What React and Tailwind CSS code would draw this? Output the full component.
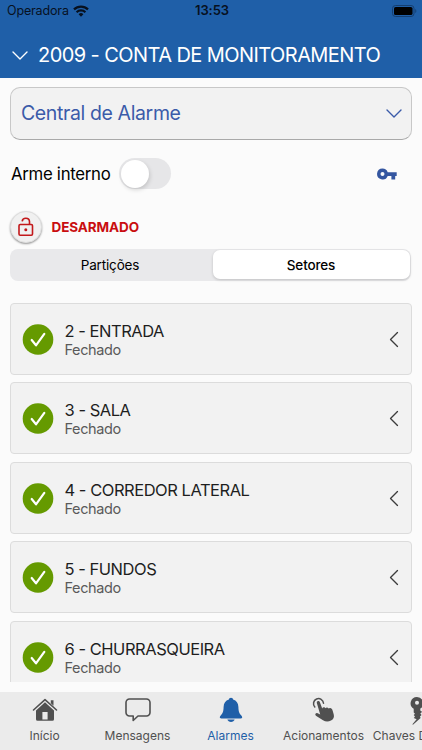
import React, { useState } from 'react';

const sectors = [
  { id: 2, name: 'ENTRADA', status: 'Fechado' },
  { id: 3, name: 'SALA', status: 'Fechado' },
  { id: 4, name: 'CORREDOR LATERAL', status: 'Fechado' },
  { id: 5, name: 'FUNDOS', status: 'Fechado' },
  { id: 6, name: 'CHURRASQUEIRA', status: 'Fechado' },
];

const Chevron = ({ className, width = 1.4 }) => (
  <svg viewBox="0 0 16 9" className={className} fill="none" stroke="currentColor" strokeWidth={width} strokeLinecap="round" strokeLinejoin="round">
    <path d="M1 1l7 7 7-7" />
  </svg>
);

const HomeIcon = () => (
  <svg viewBox="0 0 26 24" className="h-6 w-[26px]" fill="currentColor">
    <path d="M1.5 12L13 1.7 24.5 12" fill="none" stroke="currentColor" strokeWidth="1.6" strokeLinecap="round" strokeLinejoin="round" />
    <path d="M18.8 2.3h2.7v5.4l-2.7-2.4z" />
    <path fillRule="evenodd" d="M13 4.3l9 8.1v8.8a1.6 1.6 0 0 1-1.6 1.6H5.6A1.6 1.6 0 0 1 4 21.2v-8.8zM10.4 14v7.4h5.2V14z" />
  </svg>
);

const MessageIcon = () => (
  <svg viewBox="0 0 26 24" className="h-6 w-[26px]" fill="none" stroke="currentColor" strokeWidth="1.6" strokeLinejoin="round">
    <path d="M4.5 1h17A3.5 3.5 0 0 1 25 4.5v10a3.5 3.5 0 0 1-3.5 3.5H13l-4.8 4.5V18H4.5A3.5 3.5 0 0 1 1 14.5v-10A3.5 3.5 0 0 1 4.5 1z" />
  </svg>
);

const BellIcon = () => (
  <svg viewBox="0 0 24 26" className="h-[26px] w-6" fill="currentColor">
    <path d="M12 .8c1.2 0 2 .8 2.1 1.8 3.4 1 5.2 3.6 5.3 7.4.1 4.6 1 6.500 2.700 8.300.6.7 1.100 1.200 1.100 1.900 0 .8-.6 1.200-1.500 1.200H2.300c-.9 0-1.500-.4-1.500-1.200 0-.7.5-1.200 1.100-1.900C3.600 16.500 4.500 14.600 4.600 10c.1-3.800 1.900-6.400 5.300-7.400C10 1.600 10.800.8 12 .8z" />
    <path d="M8.4 22.4h7.2c-.4 1.6-1.8 2.500-3.600 2.500s-3.200-.9-3.600-2.500z" />
  </svg>
);

const TouchIcon = () => (
  <svg viewBox="0 0 24 26" className="h-[26px] w-6" fill="currentColor">
    <path d="M2.8 9.9A5 5 0 1 1 11.5 6.200" fill="none" stroke="currentColor" strokeWidth="1.5" strokeLinecap="round" />
    <path d="M4.9 6.300c-.5-1.500.4-2.300 1.300-2.300.8 0 1.400.5 1.700 1.300l2.300 6.200c.3-.9 1-1.300 1.800-1.200.7 0 1.200.4 1.500 1 .5-.8 1-1 1.700-.9.700.1 1.200.5 1.500 1.200.4-.5.900-.8 1.500-.7 1.200.1 1.900.9 2.300 2.300l1.200 4c.8 2.800-.2 5.200-2.700 6.400-2.700 1.300-5.500 1.200-8-.3L4.300 19c-.9-.7-1.300-1.500-.8-2.200.7-1 2-.8 3.200-.1l1.500.8z" />
  </svg>
);

const HouseKeyIcon = () => (
  <svg viewBox="0 -1 16 30" className="h-[30px] w-4" fill="currentColor">
    <path fillRule="evenodd" d="M8 1a6.300 6.300 0 0 1 3.300 11.600v2l1.900 1.300-1.900 1.700 1.300 1.500-1.600 1.500.6 1.500L4 28.800l-.6-.6 4.200-4.900-2.800-1.400 1.200-1.300-1.300-1.500 1.300-1.300-1.300-1.400V12.700A6.300 6.300 0 0 1 8 1zm0 3.800a2 2 0 1 0 0 4 2 2 0 0 0 0-4z" />
  </svg>
);

const tabs = [
  { label: 'Início', icon: HomeIcon },
  { label: 'Mensagens', icon: MessageIcon },
  { label: 'Alarmes', icon: BellIcon },
  { label: 'Acionamentos', icon: TouchIcon },
  { label: 'Chaves Digitais', icon: HouseKeyIcon },
];

const SectorCard = ({ sector }) => (
  <li className="mb-[7.5px] flex h-[72px] shrink-0 items-center rounded border border-[#dcdcdc] bg-[#f2f2f2] pr-[9px] pl-[11px]">
    <svg viewBox="0 0 32 32" className="size-8 shrink-0">
      <circle cx="16" cy="16.5" r="15.3" fill="#659a00" />
      <path d="M9.7 17l4.3 5.300 8.300-11.500" fill="none" stroke="#fff" strokeWidth="2.2" strokeLinecap="round" strokeLinejoin="round" />
    </svg>
    <div className="ml-[10.5px] flex-1 pt-[3px]">
      <p className="text-[16.5px] leading-[19px] tracking-[-0.47px] text-[#1e1e1e]">{sector.id} - {sector.name}</p>
      <p className="text-[14.5px] leading-[18px] tracking-[-0.38px] text-[#5a5a5a]">{sector.status}</p>
    </div>
    <Chevron className="mt-px h-[9px] w-4 rotate-90 text-[#3c3c3c]" />
  </li>
);

const App = () => {
  const [armed, setArmed] = useState(false);
  const [view, setView] = useState('Setores');
  const [activeTab, setActiveTab] = useState('Alarmes');

  return (
    <div className="flex h-[750px] w-[422px] flex-col overflow-hidden bg-[#fbfbfb] font-['Inter',sans-serif] whitespace-nowrap">
      {/* Header */}
      <header className="h-[77.5px] shrink-0 bg-[#1f5fa8]">
        <div className="grid h-[22px] grid-cols-3 items-center pr-[5px] pl-[7px] text-[#07111f]">
          <div className="flex items-center gap-1">
            <span className="pt-px text-[12.5px] tracking-[-0.15px]">Operadora</span>
            <svg viewBox="0 0 16 12" className="mb-px h-3 w-4" fill="none" stroke="currentColor" strokeWidth="2.2">
              <path d="M1 4.400a10 10 0 0 1 14 0" />
              <path d="M3.600 7.200a6.300 6.300 0 0 1 8.800 0" />
              <path d="M5.600 9.200a3.500 3.500 0 0 1 4.800 0L8 11.700z" fill="currentColor" stroke="none" />
            </svg>
          </div>
          <span className="text-center text-[13px] font-semibold tracking-[-0.1px]">13:53</span>
          <svg viewBox="0 0 25 12" className="mb-px h-3 w-[25px] justify-self-end">
            <rect x=".5" y=".5" width="21.5" height="11" rx="3" fill="none" stroke="#153f70" />
            <rect x="2" y="2" width="18.5" height="8" rx="1.6" fill="#000" />
            <path d="M23.300 4v4c1.400-.6 1.400-3.400 0-4z" fill="#153f70" />
          </svg>
        </div>
        <div className="flex h-[55px] items-center pt-[11px] pl-3 text-white">
          <Chevron className="h-[9px] w-4" />
          <h1 className="ml-2.5 text-[20px] leading-6 tracking-[-0.57px]">2009 - CONTA DE MONITORAMENTO</h1>
        </div>
      </header>

      <main className="flex min-h-0 flex-1 flex-col px-2.5 pt-[9.5px]">
        <button className="flex h-[52.5px] shrink-0 items-center justify-between rounded-[10px] border border-[#c8c8c8] border-b-[#a9a9a9] bg-[#f2f2f2] pr-[9px] pl-2.5 text-[#3b5ba9]">
          <span className="pt-px text-[19.5px] tracking-[-0.38px]">Central de Alarme</span>
          <Chevron className="h-[9px] w-4" />
        </button>

        {/* Internal arming */}
        <div className="mt-[18px] flex h-8 shrink-0 items-center pr-[15px]">
          <span className="pt-0.5 pl-px text-[16.8px] tracking-[-0.3px] text-black">Arme interno</span>
          <button
            onClick={() => setArmed(!armed)}
            className={`ml-[9px] flex h-[31px] w-[52px] items-center rounded-full p-0.5 ${armed ? 'justify-end bg-[#659a00]' : 'bg-[#e6e6e8]'}`}
          >
            <span className="size-7 rounded-full bg-white shadow-[1px_2px_4px_rgba(0,0,0,0.15)]" />
          </button>
          <svg viewBox="0 0 20 12" className="ml-auto h-3 w-5" fill="#3456a0">
            <path fillRule="evenodd" d="M5.500.5a5.500 5.500 0 0 1 5.200 3.700h9V8h-1.500v3.400h-3.800V8h-3.700A5.500 5.500 0 1 1 5.500.5zm0 3.500a2 2 0 1 0 0 4 2 2 0 0 0 0-4z" />
          </svg>
        </div>

        {/* Partition state */}
        <div className="mt-[22px] flex h-8 shrink-0 items-center">
          <span className="-mt-px flex size-8 items-center justify-center rounded-full border border-[#dedede] bg-[#f0f0f0] shadow-[0_1px_2px_rgba(0,0,0,0.4)]">
            <svg viewBox="0 0 16 20" className="h-5 w-4" fill="none" stroke="#c2181b" strokeWidth="1.6">
              <rect x="1" y="7.5" width="13.5" height="10.7" rx="1.2" />
              <path d="M4.200 4.300C4.600 .3 11.300.2 11.500 4.600V7.500" />
              <circle cx="7.8" cy="12.8" r="1.5" fill="#c2181b" stroke="none" />
            </svg>
          </span>
          <span className="ml-[9.5px] text-[13.5px] font-bold tracking-[-0.1px] text-[#c90d10]">DESARMADO</span>
        </div>

        <div className="mt-[5px] flex h-8 w-[401px] shrink-0 rounded-lg bg-[#e9e9eb] p-[1.5px]">
          {['Partições', 'Setores'].map((name) => (
            <button
              key={name}
              onClick={() => setView(name)}
              className={`rounded-[7px] pt-0.5 text-[13.5px] tracking-[-0.15px] text-black ${name === 'Setores' ? 'w-[197px]' : 'w-[201px] pr-1'} ${view === name ? 'bg-white font-medium shadow-[0_1px_3px_rgba(0,0,0,0.18)]' : ''}`}
            >
              {name}
            </button>
          ))}
        </div>

        <ul className="mt-[22px] flex min-h-0 flex-1 flex-col overflow-hidden">
          {sectors.map((s) => (
            <SectorCard key={s.id} sector={s} />
          ))}
        </ul>
      </main>

      {/* Bottom tabs */}
      <nav className="mt-2.5 -ml-0.5 flex h-[58px] shrink-0 bg-[#ebebeb]">
        {tabs.map(({ label, icon: Icon }) => (
          <button
            key={label}
            onClick={() => setActiveTab(label)}
            className={`flex w-[93px] shrink-0 flex-col items-center ${activeTab === label ? 'text-[#1f5fa8]' : 'text-[#505050]'}`}
          >
            <span className="flex h-[35px] items-center justify-center">
              <Icon />
            </span>
            <span className="mt-px text-[12px] leading-4">{label}</span>
          </button>
        ))}
      </nav>
    </div>
  );
};

export default App;
